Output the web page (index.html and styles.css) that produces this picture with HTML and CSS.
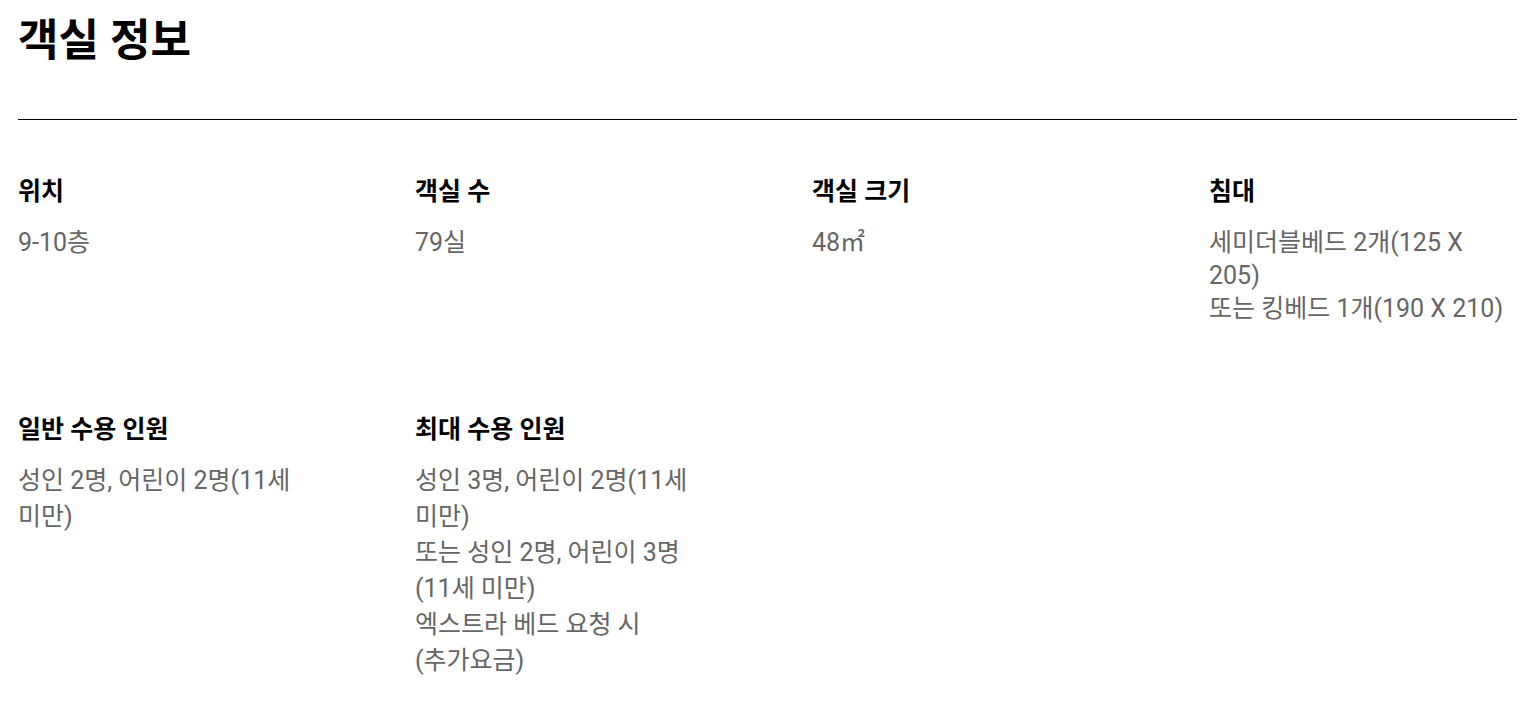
FILE: index.html
```html
<!DOCTYPE html>
<html lang="ko">
<head>
<meta charset="utf-8">
<title>객실 정보</title>
<link rel="stylesheet" href="styles.css">
</head>
<body>
<section class="room-info">
  <h1 class="title">객실 정보</h1>
  <hr class="divider">
  <div class="grid">
    <div class="item row1">
      <div class="label">위치</div>
      <div class="value">9-10층</div>
    </div>
    <div class="item row1">
      <div class="label">객실 수</div>
      <div class="value">79실</div>
    </div>
    <div class="item row1">
      <div class="label">객실 크기</div>
      <div class="value">48㎡</div>
    </div>
    <div class="item row1">
      <div class="label">침대</div>
      <div class="value">세미더블베드 2개(125 X 205)<br>또는 킹베드 1개(190 X 210)</div>
    </div>
    <div class="item row2">
      <div class="label">일반 수용 인원</div>
      <div class="value">성인 2명, 어린이 2명(11세 미만)</div>
    </div>
    <div class="item row2">
      <div class="label">최대 수용 인원</div>
      <div class="value">성인 3명, 어린이 2명(11세 미만)<br>또는 성인 2명, 어린이 3명 (11세 미만)<br>엑스트라 베드 요청 시 (추가요금)</div>
    </div>
  </div>
</section>
</body>
</html>
```

FILE: styles.css
```css
html, body {
  margin: 0;
  padding: 0;
  background: #fff;
}
body {
  font-family: "Roboto", "Noto Sans CJK KR", sans-serif;
  color: #000;
}
.room-info {
  padding: 15px 18px 0;
}
.title {
  margin: 0;
  font-size: 44px;
  line-height: 52px;
  font-weight: 700;
}
.divider {
  margin: 52px 0 0;
  border: 0;
  border-top: 1px solid #000;
  height: 0;
}
.grid {
  display: grid;
  grid-template-columns: repeat(4, 300px);
  column-gap: 97px;
  row-gap: 87px;
  padding-top: 54px;
}
.label {
  font-size: 25px;
  line-height: 36px;
  font-weight: 700;
  color: #000;
}
.value {
  font-size: 25px;
  color: #666;
  word-break: keep-all;
}
.row1 .value {
  line-height: 33px;
  margin-top: 16px;
}
.row2 .value {
  line-height: 36px;
  margin-top: 15px;
}
```
